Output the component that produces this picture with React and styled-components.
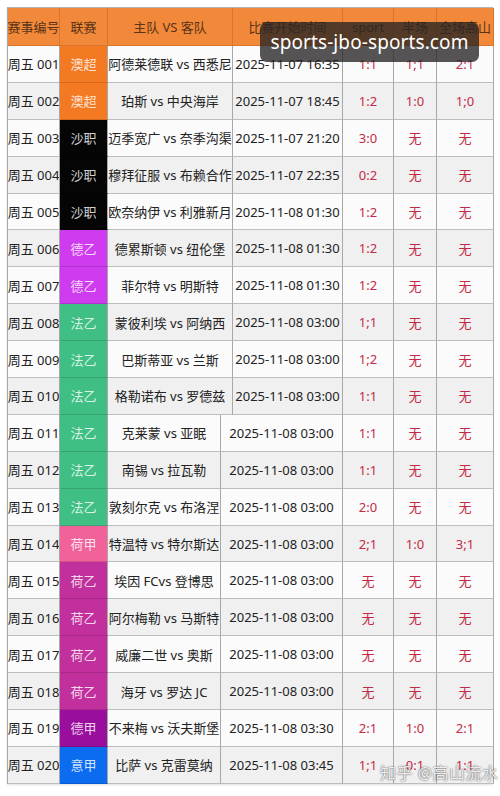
import styled, { createGlobalStyle } from 'styled-components'

const GlobalStyle = createGlobalStyle`
body {
  margin: 0;
  background: #ffffff;
  font-family: "Noto Sans", "Noto Sans CJK SC", sans-serif;
}
* { box-sizing: border-box; }`

const TOP = '52px 48px 125px 110px 51px 43px 57px'
const BOTTOM = '52px 48px 113px 122px 51px 43px 57px'

const LEAGUE = {
   澳超: '#f37a22',
   沙职: '#050505',
   德乙: '#cf3cef',
   法乙: '#40bf84',
   荷甲: '#f1619a',
   荷乙: '#c1309c',
   德甲: '#9a0e9e',
   意甲: '#0b6cf0',
}

const rows = [
   ['周五 001', '澳超', '阿德莱德联 vs 西悉尼', '2025-11-07 16:35', '1:1', '1;1', '2:1'],
   ['周五 002', '澳超', '珀斯 vs 中央海岸', '2025-11-07 18:45', '1:2', '1:0', '1;0'],
   ['周五 003', '沙职', '迈季宽广 vs 奈季沟渠', '2025-11-07 21:20', '3:0', '无', '无'],
   ['周五 004', '沙职', '穆拜征服 vs 布赖合作', '2025-11-07 22:35', '0:2', '无', '无'],
   ['周五 005', '沙职', '欧奈纳伊 vs 利雅新月', '2025-11-08 01:30', '1:2', '无', '无'],
   ['周五 006', '德乙', '德累斯顿 vs 纽伦堡', '2025-11-08 01:30', '1:2', '无', '无'],
   ['周五 007', '德乙', '菲尔特 vs 明斯特', '2025-11-08 01:30', '1:2', '无', '无'],
   ['周五 008', '法乙', '蒙彼利埃 vs 阿纳西', '2025-11-08 03:00', '1;1', '无', '无'],
   ['周五 009', '法乙', '巴斯蒂亚 vs 兰斯', '2025-11-08 03:00', '1;2', '无', '无'],
   ['周五 010', '法乙', '格勒诺布 vs 罗德兹', '2025-11-08 03:00', '1:1', '无', '无'],
   ['周五 011', '法乙', '克莱蒙 vs 亚眠', '2025-11-08 03:00', '1:1', '无', '无'],
   ['周五 012', '法乙', '南锡 vs 拉瓦勒', '2025-11-08 03:00', '1:1', '无', '无'],
   ['周五 013', '法乙', '敦刻尔克 vs 布洛涅', '2025-11-08 03:00', '2:0', '无', '无'],
   ['周五 014', '荷甲', '特温特 vs 特尔斯达', '2025-11-08 03:00', '2;1', '1:0', '3;1'],
   ['周五 015', '荷乙', '埃因 FCvs 登博思', '2025-11-08 03:00', '无', '无', '无'],
   ['周五 016', '荷乙', '阿尔梅勒 vs 马斯特', '2025-11-08 03:00', '无', '无', '无'],
   ['周五 017', '荷乙', '威廉二世 vs 奥斯', '2025-11-08 03:00', '无', '无', '无'],
   ['周五 018', '荷乙', '海牙 vs 罗达 JC', '2025-11-08 03:00', '无', '无', '无'],
   ['周五 019', '德甲', '不来梅 vs 沃夫斯堡', '2025-11-08 03:30', '2:1', '1:0', '2:1'],
   ['周五 020', '意甲', '比萨 vs 克雷莫纳', '2025-11-08 03:45', '1;1', '0:1', '1:1'],
]

const Page = styled.div`
position: relative;
width: 500px;
height: 796px;
padding: 7px;`

const Table = styled.div`
width: 486px;
border-top: 1px solid #b4b4b4;
border-left: 1px solid #a8a8a8;
box-shadow: 0 1px 2px rgba(0, 0, 0, 0.12);`

const Row = styled.div`
display: grid;
grid-template-columns: ${p => p.$cols};
height: ${p => (p.$head ? '38px' : '36.9px')};
background: ${p => (p.$head ? '#f2893a' : p.$alt ? '#f0f0f0' : '#fbfbfb')};`

const Cell = styled.div`
display: flex;
align-items: center;
justify-content: center;
white-space: nowrap;
overflow: hidden;
font-size: 13px;
color: #222;
border-right: 1px solid #a8a8a8;
border-bottom: 1px solid #bdbdbd;`

const HeadCell = styled(Cell)`
color: #5a3318;
border-right-color: #d7752c;
border-bottom-color: #d7752c;`

const League = styled(Cell)`
background: ${p => p.$bg};
color: rgba(255, 255, 255, 0.82);
border-bottom-color: rgba(0, 0, 0, 0.14);`

const Score = styled(Cell)`
color: #c42a45;`

const Banner = styled.div`
position: absolute;
top: 22px;
left: 260px;
width: 219px;
height: 40px;
border-radius: 7px;
background: rgba(38, 36, 36, 0.78);
color: #fff;
font-size: 19px;
display: flex;
align-items: center;
justify-content: center;
letter-spacing: 0.1px;`

const Mark = styled.div`
position: absolute;
left: 380px;
top: 760px;
font-size: 16px;
color: rgba(255, 255, 255, 0.9);
text-shadow: 0 0 2px rgba(0, 0, 0, 0.55), 0 0 1px rgba(0, 0, 0, 0.4);
letter-spacing: 0.5px;`

export default function App() {
   return (
      <Page>
         <GlobalStyle />
         <Table>
            <Row $head $cols={TOP}>
               <HeadCell>赛事编号</HeadCell>
               <HeadCell>联赛</HeadCell>
               <HeadCell>主队 VS 客队</HeadCell>
               <HeadCell>比赛开始时间</HeadCell>
               <HeadCell>sport</HeadCell>
               <HeadCell>半场</HeadCell>
               <HeadCell>全场高山</HeadCell>
            </Row>
            {rows.map((r, i) => (
               <Row key={r[0]} $alt={i % 2 === 1} $cols={i < 10 ? TOP : BOTTOM}>
                  <Cell>{r[0]}</Cell>
                  <League $bg={LEAGUE[r[1]]}>{r[1]}</League>
                  <Cell>{r[2]}</Cell>
                  <Cell>{r[3]}</Cell>
                  <Score>{r[4]}</Score>
                  <Score>{r[5]}</Score>
                  <Score>{r[6]}</Score>
               </Row>
            ))}
         </Table>
         <Banner>sports-jbo-sports.com</Banner>
         <Mark>知乎 @高山流水</Mark>
      </Page>
   );
}
